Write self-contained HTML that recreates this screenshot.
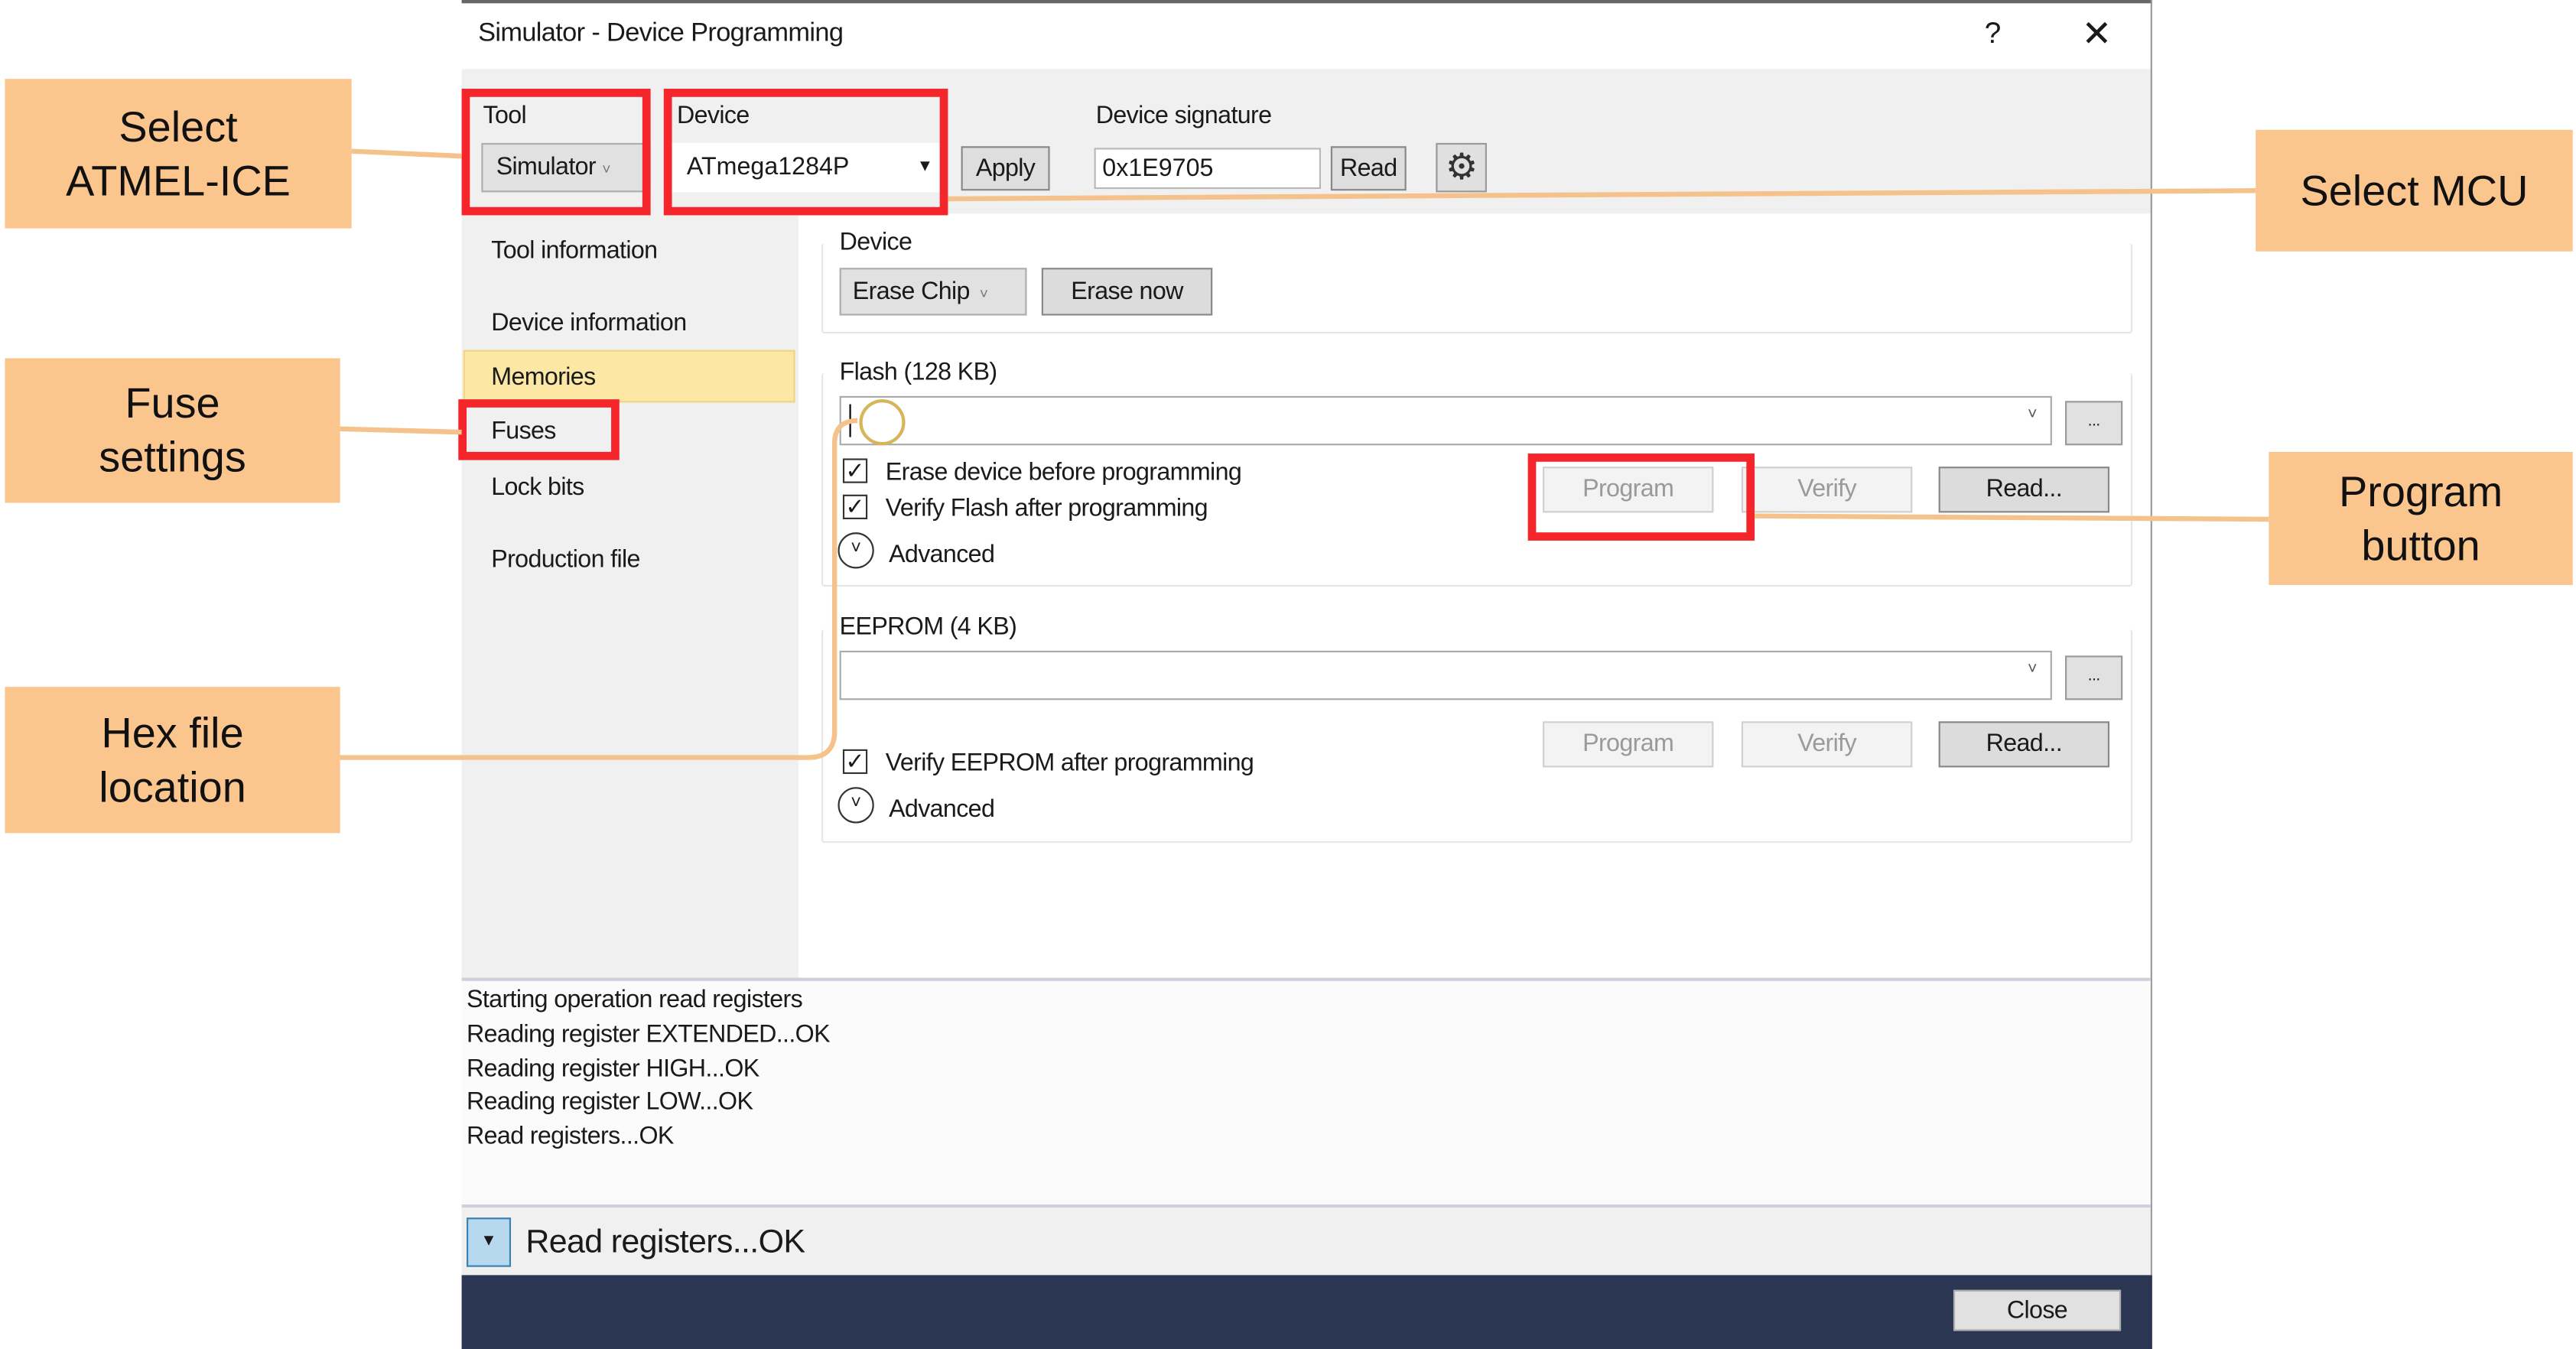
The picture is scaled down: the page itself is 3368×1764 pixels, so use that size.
<!DOCTYPE html>
<html><head><meta charset="utf-8"><style>
html,body{margin:0;padding:0;background:#fff;overflow:hidden;width:3368px;height:1764px}
#s{position:absolute;left:0;top:0;width:1568px;height:821px;transform:scale(2.148,2.1487);transform-origin:0 0;font-family:"Liberation Sans",sans-serif;font-size:15px;color:#1a1a1a}
.a{position:absolute}
.t{position:absolute;white-space:nowrap;letter-spacing:-0.3px}
.btn{position:absolute;background:#e1e1e1;border:1px solid #adadad;box-sizing:border-box;text-align:center;white-space:nowrap;letter-spacing:-0.3px}
.dis{background:#f3f3f3;border-color:#d0d0d0;color:#9a9a9a}
.inp{position:absolute;background:#fff;border:1px solid #b8b8b8;box-sizing:border-box}
.red{position:absolute;border:5px solid #f4262c;box-sizing:border-box}
.note{position:absolute;background:#fbc68e;font-size:26px;text-align:center;color:#111;display:flex;align-items:center;justify-content:center;line-height:33px}
.grp{position:absolute;border:1px solid #e6e6e6;box-sizing:border-box;border-radius:2px}
.cb{position:absolute;width:15px;height:15px;border:1px solid #333;box-sizing:border-box;background:#fff;font-size:14px;line-height:13px;text-align:center}
.circ{position:absolute;width:22px;height:22px;border:1.5px solid #333;border-radius:50%;box-sizing:border-box;font-size:11px;text-align:center;line-height:19px}
</style></head><body><div id="s">
<!-- dialog -->
<div class="a" style="left:281px;top:0;width:1029px;height:42px;background:#fff;border-top:2px solid #666;box-sizing:border-box"></div>
<div class="t" style="left:291px;top:12px;font-size:16px">Simulator - Device Programming</div>
<div class="t" style="left:1208px;top:10px;font-size:18px">?</div>
<div class="t" style="left:1267px;top:8px;font-size:22px">✕</div>
<div class="a" style="left:281px;top:42px;width:1029px;height:88px;background:#f0f0f0"></div>
<div class="a" style="left:281px;top:130px;width:205px;height:465px;background:#f0f0f0"></div>
<div class="a" style="left:1309px;top:0;width:1px;height:776px;background:#999"></div>
<!-- top row -->
<div class="t" style="left:294px;top:62px">Tool</div>
<div class="btn" style="left:293px;top:87px;width:103px;height:30px;line-height:28px;text-align:left;padding-left:8px">Simulator <span style="font-size:9px;color:#777">˅</span></div>
<div class="t" style="left:412px;top:62px">Device</div>
<div class="inp" style="left:409px;top:87px;width:166px;height:30px;border-color:#fff;line-height:28px;padding-left:8px">ATmega1284P<span style="position:absolute;right:6px;font-size:10px">▼</span></div>
<div class="btn" style="left:585px;top:89px;width:54px;height:27px;line-height:25px;background:#dedede;border-color:#888">Apply</div>
<div class="t" style="left:667px;top:62px">Device signature</div>
<div class="inp" style="left:666px;top:90px;width:138px;height:25px;line-height:23px;padding-left:4px">0x1E9705</div>
<div class="btn" style="left:810px;top:89px;width:46px;height:27px;line-height:25px;background:#dedede;border-color:#888">Read</div>
<div class="btn" style="left:874px;top:87px;width:31px;height:30px;background:#e0e0e0;border-color:#999;font-size:22px;line-height:28px;color:#333">⚙</div>
<!-- nav -->
<div class="t" style="left:299px;top:144px">Tool information</div>
<div class="t" style="left:299px;top:188px">Device information</div>
<div class="a" style="left:282px;top:213px;width:202px;height:32px;background:#fce7a4;border:1px solid #f1d483;box-sizing:border-box"></div>
<div class="t" style="left:299px;top:221px">Memories</div>
<div class="t" style="left:299px;top:254px">Fuses</div>
<div class="t" style="left:299px;top:288px">Lock bits</div>
<div class="t" style="left:299px;top:332px">Production file</div>
<!-- device group -->
<div class="grp" style="left:500px;top:148px;width:798px;height:55px;border-top:none"></div>
<div class="t" style="left:511px;top:139px">Device</div>
<div class="btn" style="left:511px;top:163px;width:114px;height:29px;line-height:27px;text-align:left;padding-left:7px">Erase Chip <span style="font-size:9px;color:#777">&nbsp;˅</span></div>
<div class="btn" style="left:634px;top:163px;width:104px;height:29px;line-height:27px;background:#dcdcdc;border-color:#888">Erase now</div>
<!-- flash group -->
<div class="grp" style="left:500px;top:227px;width:798px;height:130px;border-top:none"></div>
<div class="t" style="left:511px;top:218px">Flash (128 KB)</div>
<div class="inp" style="left:511px;top:241px;width:738px;height:30px;border-color:#aaa"><span style="position:absolute;right:8px;top:5px;font-size:10px;color:#555">˅</span><span style="position:absolute;left:5px;top:4px;width:1px;height:20px;background:#000"></span></div>
<div class="btn" style="left:1257px;top:244px;width:35px;height:27px;line-height:23px;font-size:10px;border-color:#999">...</div>
<div class="cb" style="left:513px;top:279px">✓</div><div class="t" style="left:539px;top:279px">Erase device before programming</div>
<div class="cb" style="left:513px;top:301px">✓</div><div class="t" style="left:539px;top:301px">Verify Flash after programming</div>
<div class="circ" style="left:510px;top:324px">˅</div><div class="t" style="left:541px;top:329px">Advanced</div>
<div class="btn dis" style="left:939px;top:284px;width:104px;height:28px;line-height:26px">Program</div>
<div class="btn dis" style="left:1060px;top:284px;width:104px;height:28px;line-height:26px">Verify</div>
<div class="btn" style="left:1180px;top:284px;width:104px;height:28px;line-height:26px;background:#dcdcdc;border-color:#888">Read...</div>
<div class="a" style="left:523px;top:243px;width:28px;height:28px;border:2px solid #d8b45a;border-radius:50%;box-sizing:border-box;background:rgba(255,255,255,.4)"></div>
<!-- eeprom group -->
<div class="grp" style="left:500px;top:383px;width:798px;height:130px;border-top:none"></div>
<div class="t" style="left:511px;top:373px">EEPROM (4 KB)</div>
<div class="inp" style="left:511px;top:396px;width:738px;height:30px;border-color:#aaa"><span style="position:absolute;right:8px;top:5px;font-size:10px;color:#555">˅</span></div>
<div class="btn" style="left:1257px;top:399px;width:35px;height:27px;line-height:23px;font-size:10px;border-color:#999">...</div>
<div class="btn dis" style="left:939px;top:439px;width:104px;height:28px;line-height:26px">Program</div>
<div class="btn dis" style="left:1060px;top:439px;width:104px;height:28px;line-height:26px">Verify</div>
<div class="btn" style="left:1180px;top:439px;width:104px;height:28px;line-height:26px;background:#dcdcdc;border-color:#888">Read...</div>
<div class="cb" style="left:513px;top:456px">✓</div><div class="t" style="left:539px;top:456px">Verify EEPROM after programming</div>
<div class="circ" style="left:510px;top:479px">˅</div><div class="t" style="left:541px;top:484px">Advanced</div>
<!-- log -->
<div class="a" style="left:281px;top:595px;width:1028px;height:140px;background:#fbfbfb;border-top:2px solid #cfd0dc;border-bottom:2px solid #cfd0dc;box-sizing:border-box"></div>
<div class="t" style="left:284px;top:599px;line-height:20.8px">Starting operation read registers<br>Reading register EXTENDED...OK<br>Reading register HIGH...OK<br>Reading register LOW...OK<br>Read registers...OK</div>
<div class="a" style="left:281px;top:735px;width:1028px;height:41px;background:#f0f0f0"></div>
<div class="a" style="left:284px;top:741px;width:27px;height:30px;background:#b7d9f0;border:1px solid #3c7fb1;box-sizing:border-box;font-size:10px;text-align:center;line-height:28px">▼</div>
<div class="t" style="left:320px;top:745px;font-size:20px">Read registers...OK</div>
<div class="a" style="left:281px;top:776px;width:1029px;height:45px;background:#2b3752"></div>
<div class="btn" style="left:1189px;top:785px;width:102px;height:25px;line-height:24px;background:#e1e1e1">Close</div>
<!-- red boxes -->
<div class="red" style="left:281px;top:54px;width:115px;height:77px"></div>
<div class="red" style="left:404px;top:54px;width:173px;height:77px"></div>
<div class="red" style="left:279px;top:243px;width:98px;height:37px"></div>
<div class="red" style="left:930px;top:276px;width:138px;height:53px"></div>
<!-- lines -->
<svg class="a" style="left:0;top:0" width="1568" height="821"><g fill="none" stroke="#f5c28c" stroke-width="3">
<path d="M214 92 L281 95"/><path d="M577 121 L1373 116"/><path d="M207 261 L281 263"/>
<path d="M207 461 L492 461 Q508 461 508 445 L508 270 Q508 256 522 256"/><path d="M1068 314 L1381 316"/></g></svg>
<!-- notes -->
<div class="note" style="left:3px;top:48px;width:211px;height:91px">Select<br>ATMEL-ICE</div>
<div class="note" style="left:3px;top:218px;width:204px;height:88px">Fuse<br>settings</div>
<div class="note" style="left:3px;top:418px;width:204px;height:89px">Hex file<br>location</div>
<div class="note" style="left:1373px;top:79px;width:193px;height:74px">Select MCU</div>
<div class="note" style="left:1381px;top:275px;width:185px;height:81px">Program<br>button</div>
</div></body></html>
